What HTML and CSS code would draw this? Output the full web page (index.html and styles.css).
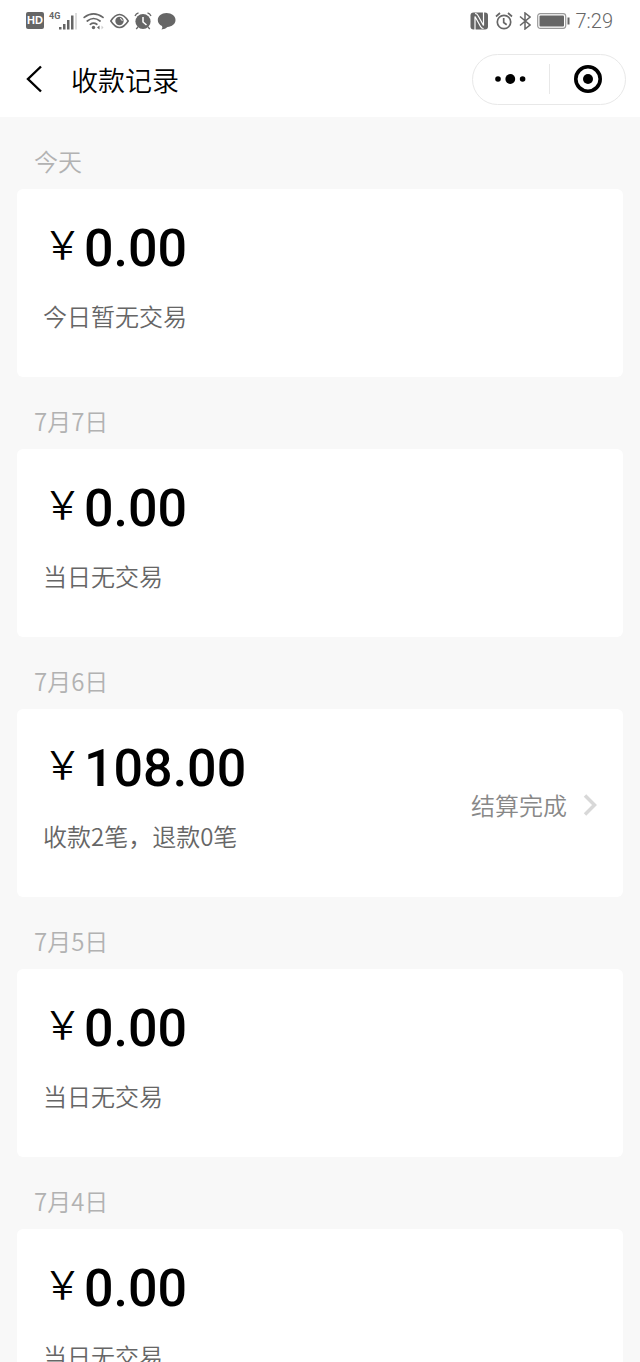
FILE: index.html
```html
<!DOCTYPE html>
<html lang="zh-CN">
<head>
<meta charset="utf-8">
<meta name="viewport" content="width=device-width, initial-scale=1">
<title>收款记录</title>
<link rel="stylesheet" href="styles.css">
</head>
<body>
<div class="app">
  <div class="status-bar">
    <div class="status-left">
      <span class="hd">HD</span>
      <div class="signal">
        <span class="net">4G</span>
        <svg width="19" height="18" viewBox="0 0 19 18"><g fill="#666"><rect x="0" y="15" width="2.500" height="2.500"/><rect x="4" y="12" width="2.500" height="5.500"/><rect x="8" y="8" width="2.500" height="9.500"/><rect x="12" y="3.500" width="2.500" height="14"/></g><rect x="16" y="1" width="2" height="16.500" fill="#ddd"/></svg>
      </div>
      <svg class="wifi" width="22" height="18" viewBox="0 0 22 18" fill="none" stroke="#666" stroke-width="1.700" stroke-linecap="round"><path d="M1.200 5.400Q10.500-1.700 20 5.400M4.300 9Q10.500 4 17 9M7.300 12.300Q10.500 9.800 13.800 12.300"/><circle cx="10.500" cy="15.500" r="1.700" fill="#666" stroke="none"/><path d="M16.500 13.500v4L14 15.500z" fill="#666" stroke="none"/><path d="M18.500 13.500v4l2-2z" fill="#ccc" stroke="none"/></svg>
      <svg class="eye" width="19" height="16" viewBox="0 0 19 16"><path d="M.8 8C4 3 6.500 1.500 9.500 1.500S15 3 18.200 8C15 13 12.500 14.500 9.500 14.500S4 13 .8 8Z" fill="none" stroke="#666" stroke-width="1.500"/><circle cx="9.500" cy="8" r="4.200" fill="#666"/><path d="M10 5.500a2.500 2.500 0 0 1 2.200 2.400" fill="none" stroke="#fff" stroke-width="1"/></svg>
      <svg class="alarm-solid" width="18" height="18" viewBox="0 0 18 18"><circle cx="9" cy="9.500" r="7.600" fill="#666"/><path d="M1 4Q2 1.500 4.500 .8M17 4Q16 1.500 13.500 .8M4 15l-1.800 2M14 15l1.800 2" fill="none" stroke="#666" stroke-width="1.300"/><path d="M9 5v5l3.500 3" fill="none" stroke="#fff" stroke-width="1.500"/></svg>
      <svg class="bubble" width="19" height="18" viewBox="0 0 19 18"><path d="M9.500 1C14.700 1 18.500 3.900 18.500 8S14.800 14.500 10.500 15Q8.500 17 4.500 17.500Q6 15.500 5 14C2.300 12.700.800 10.700.800 8 .800 3.900 4.500 1 9.500 1Z" fill="#666"/></svg>
    </div>
    <div class="status-right">
      <svg width="19" height="18" viewBox="0 0 19 18"><rect x=".5" y=".5" width="17.500" height="17" rx="3" fill="#666"/><path d="M5 18V4.500L10.500 14.500Q11.500 16.500 13.500 16.500M13.500 0V13.500L8 3.500Q7 1.500 5 1.500" fill="none" stroke="#fff" stroke-width="1.200"/></svg>
      <svg class="alarm" width="18" height="18" viewBox="0 0 18 18" fill="none" stroke="#666" stroke-width="1.700"><circle cx="9" cy="10" r="6.700"/><path d="M1 4.500l4-3.500M17 4.500l-4-3.500M8.700 6v4.500l3 2.200"/></svg>
      <svg class="bt" width="12" height="18" viewBox="0 0 12 18" fill="none" stroke="#666" stroke-width="1.500"><path d="M1 4.500l10 8.500-5 4V1l5 4L1 13.500"/></svg>
      <svg class="battery" width="33" height="16" viewBox="0 0 33 16"><rect x=".7" y=".7" width="28" height="14.600" rx="2.500" fill="none" stroke="#999" stroke-width="1.200"/><rect x="2.500" y="2.500" width="24.500" height="11" rx="1" fill="#666"/><rect x="30.500" y="4.500" width="2" height="7" fill="#666"/></svg>
      <span class="clock">7:29</span>
    </div>
  </div>
  <header class="nav">
    <button class="back" aria-label="返回"><svg width="18" height="28" viewBox="0 0 18 28" fill="none" stroke="#000" stroke-width="2.400"><path d="M15 1.500L2 14l13 12.500"/></svg></button>
    <h1 class="title">收款记录</h1>
    <div class="capsule">
      <button class="cap-btn" aria-label="更多"><svg width="32" height="12" viewBox="0 0 32 12"><circle cx="3" cy="6" r="2.800"/><circle cx="15.300" cy="6" r="4.900"/><circle cx="27.600" cy="6" r="2.800"/></svg></button>
      <span class="cap-line"></span>
      <button class="cap-btn" aria-label="关闭"><svg width="30" height="30" viewBox="0 0 30 30"><circle cx="16" cy="15" r="12.200" fill="none" stroke="#000" stroke-width="3.600"/><circle cx="16" cy="15" r="5"/></svg></button>
    </div>
  </header>
  <main class="list">
    <section class="day">
      <h2 class="date">今天</h2>
      <div class="card"><div><p class="amount"><span class="yen">￥</span>0.00</p><p class="note">今日暂无交易</p></div></div>
    </section>
    <section class="day">
      <h2 class="date">7月7日</h2>
      <div class="card"><div><p class="amount"><span class="yen">￥</span>0.00</p><p class="note">当日无交易</p></div></div>
    </section>
    <section class="day">
      <h2 class="date">7月6日</h2>
      <div class="card"><div><p class="amount"><span class="yen">￥</span>108.00</p><p class="note">收款2笔，退款0笔</p></div>
        <a class="settled" href="#">结算完成<svg width="14" height="22" viewBox="0 0 14 22" fill="none" stroke="#d8d8d8" stroke-width="3.500"><path d="M2 1.500L11.500 11 2 20.500"/></svg></a>
      </div>
    </section>
    <section class="day">
      <h2 class="date">7月5日</h2>
      <div class="card"><div><p class="amount"><span class="yen">￥</span>0.00</p><p class="note">当日无交易</p></div></div>
    </section>
    <section class="day">
      <h2 class="date">7月4日</h2>
      <div class="card"><div><p class="amount"><span class="yen">￥</span>0.00</p><p class="note">当日无交易</p></div></div>
    </section>
  </main>
</div>
</body>
</html>
```
FILE: styles.css
```css
* { box-sizing: border-box; }
body {
  margin: 0;
  background: #f8f8f8;
  color: #000;
  font-family: "Noto Sans CJK SC", sans-serif;
}
h1, h2, p { margin: 0; font-weight: 400; }
svg { display: block; flex: none; }
button { padding: 0; border: 0; background: none; cursor: pointer; }

.app { display: flex; flex-direction: column; height: 100vh; }

.status-bar {
  display: flex;
  justify-content: space-between;
  align-items: center;
  flex: none;
  height: 41px;
  padding: 0 27px 0 26px;
  background: #fff;
  color: #666;
}
.status-left, .status-right { display: flex; align-items: center; }
.status-left { gap: 5px; }
.status-right { gap: 6px; }
.hd {
  width: 18px;
  border-radius: 2px;
  background: #666;
  color: #fff;
  font: bold 11px/17px "Liberation Sans", sans-serif;
  text-align: center;
}
.signal { display: flex; align-items: flex-start; }
.net { width: 10px; font: bold 9px/9px "Roboto", sans-serif; }
.clock { font: 300 20px/24px "Roboto", sans-serif; }

.nav {
  display: flex;
  align-items: center;
  flex: none;
  height: 76px;
  padding: 0 14px 0 26px;
  background: #fff;
}
.title { flex: 1; padding: 2px 0 0 27px; font-size: 27px; font-weight: 350; line-height: 40px; }
.capsule {
  display: flex;
  align-items: center;
  width: 154px;
  height: 51px;
  border: 1px solid #e8e8e8;
  border-radius: 26px;
}
.cap-btn { display: flex; flex: 1; justify-content: center; align-items: center; height: 100%; }
.cap-line { width: 1px; height: 30px; background: #e8e8e8; }

.list { flex: 1; min-height: 0; padding: 0 17px; overflow-y: auto; scrollbar-width: none; }
.date {
  height: 72px;
  padding: 26px 17px 0;
  color: #b2b2b2;
  font-size: 24px;
  font-weight: 350;
  line-height: 36px;
}
.card {
  display: flex;
  justify-content: space-between;
  align-items: center;
  min-height: 188px;
  padding: 27px 26px 43px;
  border-radius: 6px;
  background: #fff;
}
.amount {
  display: flex;
  font: 500 52px/64px "Roboto", sans-serif;
}
.yen {
  width: 41px;
  font: 350 39px/50px "Noto Sans CJK SC", sans-serif;
}
.note { padding-top: 17px; color: #666; font-size: 24px; font-weight: 350; line-height: 36px; }
.settled {
  display: flex;
  align-items: center;
  gap: 16px;
  padding-top: 20px;
  color: #888;
  font-size: 24px;
  font-weight: 350;
  line-height: 36px;
  text-decoration: none;
}
```
